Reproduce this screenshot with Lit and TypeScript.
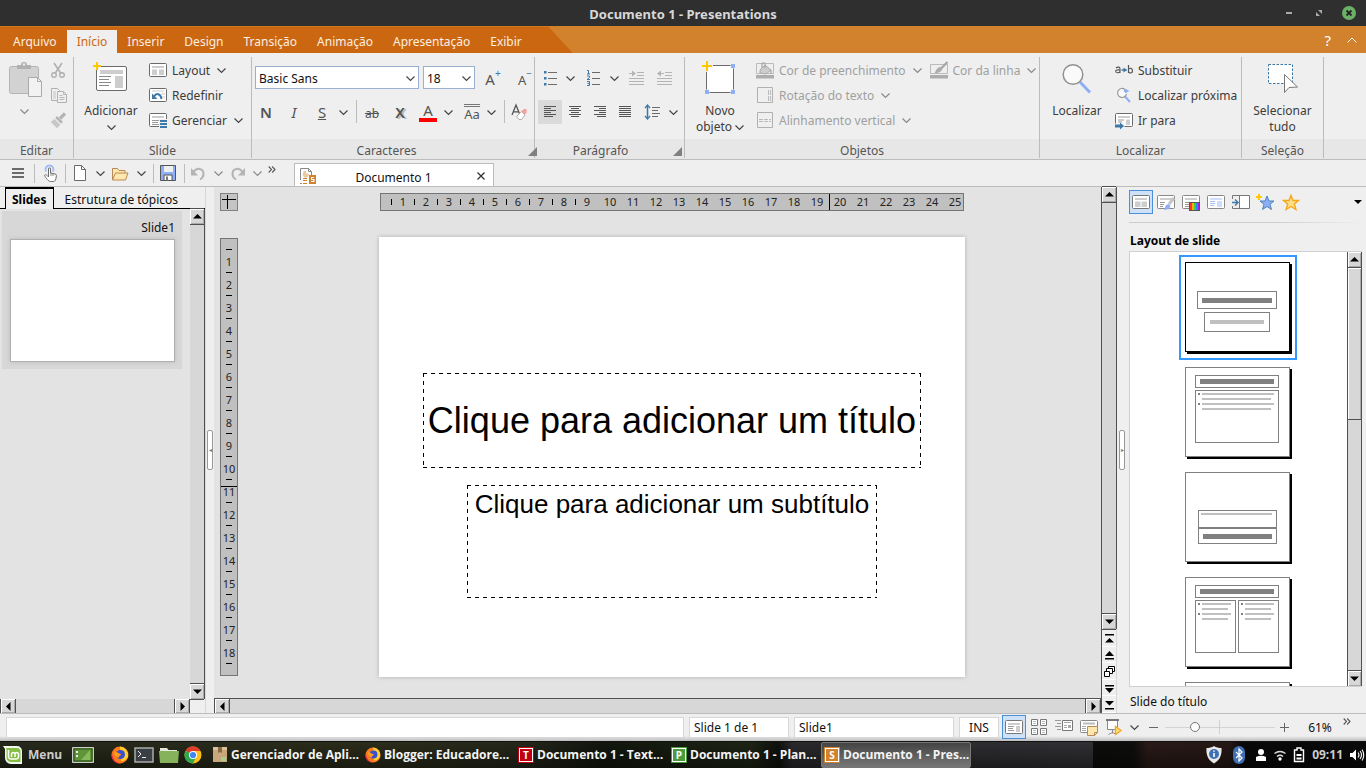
import { LitElement, html, svg, css, nothing } from "lit";
import { customElement, state } from "lit/decorators.js";
import { classMap } from "lit/directives/class-map.js";

const chev = html`<svg class="chev" width="9" height="5" viewBox="0 0 9 5"><path d="M.5 .5 4.5 4.4 8.5 .5" fill="none" stroke="currentColor" stroke-width="1.2"/></svg>`;
const more = html`<svg width="8" height="7" viewBox="0 0 8 7"><path d="M.7 .5 3.5 3.5 .7 6.5M4.2 .5 7 3.5 4.2 6.5" fill="none" stroke="#555" stroke-width="1.1"/></svg>`;
const pic = (w: number, h: number, body: unknown) =>
  html`<svg class="pic" width=${w} height=${h} viewBox="0 0 ${w} ${h}" fill="none" aria-hidden="true">${body}</svg>`;
const row = (body: unknown) => pic(18, 17, body);
const big = (body: unknown) => pic(36, 37, body);
const sq = (body: unknown) => pic(20, 20, body);

const frame = svg`<rect x=".5" y="1.5" width="17" height="13" rx="1" fill="#fff" stroke="#6b6b6b"/>`;
const I = {
  paste: big(svg`<rect x="2.5" y="6.5" width="29" height="27" rx="2" fill="#d2d2d2" stroke="#b4b4b4"/><path d="M10 9V5h4a3 3 0 0 1 6 0h4v4z" fill="#b0b0b0"/><circle cx="17" cy="4.5" r="1.2" fill="#efefef"/><path d="M21.5 17.5h9l4 4v15h-13z" fill="#f2f2f2" stroke="#aaa"/><path d="M30.5 17.5v4h4" stroke="#aaa"/>`),
  cut: row(svg`<path d="M5 1 12 11.5M13 1 6 11.5" stroke="#b0b0b0" stroke-width="1.6"/><circle cx="5" cy="13" r="2.3" stroke="#b0b0b0" stroke-width="1.4"/><circle cx="13" cy="13" r="2.3" stroke="#b0b0b0" stroke-width="1.4"/>`),
  copy: row(svg`<path d="M2.5 1.5h6l2 2v10h-8z" fill="#f0f0f0" stroke="#b0b0b0"/><path d="M4 5h3M4 7h3M4 9h3M4 11h3" stroke="#c4c4c4"/><path d="M8.5 4.5h6l3 3v8h-9z" fill="#f0f0f0" stroke="#b0b0b0"/><path d="M14.5 4.5v3h3M10.5 8.5h3M10.5 10.5h5M10.5 12.5h5" stroke="#b8b8b8"/>`),
  brush: row(svg`<path d="M16 1.5 11 6.5" stroke="#b4b4b4" stroke-width="3.2"/><path d="m8 4 6 6-2 1.6L6.3 6z" fill="#b4b4b4"/><path d="M5.5 6.8 11.5 12.6 8 16.5 1.5 10z" fill="#d0d0d0"/><path d="m3.5 9 5 6M5 8l5 6" stroke="#bcbcbc"/>`),
  add: big(svg`<rect x="3.5" y="6.5" width="30" height="24" rx="1.5" fill="#fff" stroke="#6b6b6b"/><path d="M7 10h23v4H7zM22 16h8v12h-8z" fill="#cdcdcd"/><path d="M6 16.5h12M6 19.5h10M6 22.5h12M6 25.5h10" stroke="#8a8a8a"/><path d="M4 2v8M0 6h8" stroke="#efefef" stroke-width="4"/><path d="M4 2v8M0 6h8" stroke="#ffc800" stroke-width="2"/>`),
  layout: row(svg`${frame}<path d="M3 4h12v2H3zM3 7.5h5V13H3zM10 7.5h5V13h-5z" fill="#cdcdcd"/>`),
  reset: row(svg`${frame}<path d="M3 4h12M12 7h4M12 10h4" stroke="#ccc"/><path d="M5 9.5C7 6 11.5 6 12.5 12" stroke="#3c78a8" stroke-width="2"/><path d="M3 6.5v5.5h5.5z" fill="#3c78a8"/>`),
  manage: row(svg`${frame}<path d="M3 4h12v2H3z" fill="#cdcdcd"/><path d="M3 8.5h7M3 10.5h6M3 12.5h7" stroke="#999"/><path d="M10 7h9v10h-9z" fill="#efefef"/><path d="M11 9h7M11 12h7M11 15h7" stroke="#3c78a8" stroke-width="2"/>`),
  fill: row(svg`<path d="M.5 1.5h17v10H.5z" stroke="#bbb"/><path d="M4 8 9 3l6 5-5 4-6-1z" fill="#ccc" stroke="#aaa"/><path d="M6 6V1.5a2 2 0 0 1 3 0V6M15 8v4" stroke="#aaa" stroke-width="1.3"/><path d="M0 13h18v3.5H0z" fill="#adadad"/>`),
  line: row(svg`<path d="M.5 2.5h17v9H.5z" stroke="#bbb"/><path d="M17.5 0 11 6.5" stroke="#a8a8a8" stroke-width="2.4"/><path d="M11.5 5.5 9 5 6 8l-1.5 4L10 10l2.5-2.5z" fill="#adadad"/><path d="M0 13h18v3.5H0z" fill="#adadad"/>`),
  rotate: row(svg`<path d="M1.5 .5h15v15h-15z" stroke="#b0b0b0"/><path d="M12.5 3v11M14.5 3v11" stroke="#bbb" stroke-dasharray="5 1"/>`),
  valign: row(svg`<path d="M1.5 .5h15v15h-15z" stroke="#b0b0b0"/><path d="M3 7.5h12M3 9.5h12" stroke="#bbb" stroke-dasharray="4 1"/>`),
  shape: big(svg`<path d="M4.5 5.5h27v27h-27z" fill="#fff" stroke="#6b6b6b"/><path d="M5 0v12M-1 6h12" stroke="#efefef" stroke-width="3"/><path d="M5 1v10M0 6h10" stroke="#ffc800" stroke-width="2"/><path d="M28.5 3.5h5v5h-5zM2.5 29.5h5v5h-5zM28.5 29.5h5v5h-5z" fill="#efefef"/><path d="M29 4h4v4h-4zM3 30h4v4H3zM29 30h4v4h-4z" fill="#8faef8"/>`),
  find: big(svg`<path d="M21 22 31 32.5" stroke="#8faef8" stroke-width="3"/><circle cx="14" cy="14.5" r="9.8" fill="#fafafa" stroke="#909090" stroke-width="1.5"/>`),
  replace: row(svg`<path d="M6.5 8h5" stroke="#3c78a8" stroke-width="1.5"/><path d="M8.5 5.5v5l3.5-2.5z" fill="#3c78a8"/><path d="M1 6c1-1 4-1.500 4 .8V11M5 8C1 7.500 .5 8.500 .7 9.500 1 11.500 4.500 11 5 9.500" stroke="#555" stroke-width="1.1"/><path d="M13.500 3v8M13.500 7.500c1-2 4-1.500 4 1.200s-3 3-4 1" stroke="#555" stroke-width="1.2"/>`),
  next: row(svg`<path d="m10 9.5 5 5.500" stroke="#8faef8" stroke-width="2"/><path d="M10 2.500A4.500 4.500 0 1 0 11.500 7" fill="#fafafa" stroke="#999" stroke-width="1.2"/><path d="M9 4h4.500M11 2v4" stroke="#8faef8" stroke-width="1.8"/>`),
  goto: row(svg`${frame}<path d="M3 4h12v2H3zM11 7.5h4V13h-4z" fill="#cdcdcd"/><path d="M3 8h6M3 10h4" stroke="#999"/><path d="M0 11.5h9.5v5H0z" fill="#efefef"/><path d="M0 14h6" stroke="#3c78a8" stroke-width="3"/><path d="M5 10.5v7l4-3.5z" fill="#3c78a8"/>`),
  select: big(svg`<path d="M3.5 4.5h24v19h-24z" fill="#fff" stroke="#3c78a8" stroke-dasharray="2.5 1.5"/><path d="M19.5 14.5v18l4.5-5 8.5-.5z" fill="#fff" stroke="#777"/>`),
  bullets: sq(svg`<path d="M4 3h2.500v2.500H4zM4 9h2.500v2.500H4zM4 15h2.500v2.500H4z" fill="#3c78a8"/><path d="M8 4.500h9M8 10.500h9M8 16.500h9" stroke="#6b6b6b"/>`),
  numbers: sq(svg`<path d="M4 2.500h1.500V6M4 6h3M4 8h2.500v1.500L4 11.500h3M4 13.500h2.500v4H4M4.500 15.500h2" stroke="#3c78a8"/><path d="M9 4.500h8M9 10.500h8M9 16.500h8" stroke="#6b6b6b"/>`),
  indent: sq(svg`<path d="M10 4.500h7M10 7.500h7M2 10.500h15M2 13.500h15M2 16.500h15M2 5.500h4" stroke="#b4b4b4"/><path d="M5 2.500v6l4-3z" fill="#b4b4b4"/>`),
  outdent: sq(svg`<path d="M10 4.500h7M10 7.500h7M2 10.500h15M2 13.500h15M2 16.500h15M5 5.500h4" stroke="#b4b4b4"/><path d="M6 2.500v6l-4-3z" fill="#b4b4b4"/>`),
  left: sq(svg`<path d="M4 4.500h12M4 6.500h7M4 8.500h12M4 10.500h7M4 12.500h12M4 14.500h9" stroke="#555"/>`),
  center: sq(svg`<path d="M4 4.500h12M6 6.500h8M4 8.500h12M6 10.500h8M4 12.500h12M6 14.500h8" stroke="#555"/>`),
  right: sq(svg`<path d="M4 4.500h12M9 6.500h7M4 8.500h12M9 10.500h7M4 12.500h12M7 14.500h9" stroke="#555"/>`),
  justify: sq(svg`<path d="M4 4.500h12M4 6.500h12M4 8.500h12M4 10.500h12M4 12.500h12M4 14.500h12" stroke="#555"/>`),
  spacing: sq(svg`<path d="M10 5.500h8M10 8.500h6M10 11.500h8M10 14.500h6" stroke="#6b6b6b"/><path d="M5.500 4v12" stroke="#3c78a8" stroke-width="1.5"/><path d="m3 6 2.500-3 2.500 3M3 14l2.500 3 2.500-3" stroke="#3c78a8" stroke-width="1.2"/>`),
  eraser: sq(svg`<path d="M3 13 7 3l4 10M4.300 9.800h5.400" stroke="#555" stroke-width="1.3"/><path d="m8 14 4.500-4.500 3.500 3.500-3.500 4.500H10l-2-2z" fill="#fff" stroke="#999" stroke-width=".8"/><path d="M12 9.500 15 7h2.500v3.500L15.500 13z" fill="#f4a0a0"/>`),
  menu: sq(svg`<path d="M4 6h12M4 10h12M4 14h12" stroke="#6b6b6b" stroke-width="1.8"/>`),
  hand: sq(svg`<path d="M6 8.500a4 4 0 1 1 7 0" stroke="#a4bcf5" stroke-width="2"/><path d="M8.500 13V6c0-1.600 2-1.600 2 0v4l4.500 1c1.500 .3 1.500 1 1.200 3-.3 2.500-1 4.500-2.700 4.500h-3C8.500 18.500 6 15 4.500 12.500c1-1.500 2.500-.5 4 1.500z" fill="#fff" stroke="#6b6b6b"/><path d="M11 10v3M13 10.500v2.500" stroke="#888"/>`),
  doc: sq(svg`<path d="M4.500 2.500h7l4 4v11h-11z" fill="#fff" stroke="#6b6b6b"/><path d="M11.500 2.500v4h4" stroke="#6b6b6b"/>`),
  folder: sq(svg`<path d="M2.500 17V5.500h5l1.500 2h6V10" fill="#ffe7ae" stroke="#b98a55"/><path d="m2.500 17 3-7h12.500l-2.500 7z" fill="#ffe7ae" stroke="#b98a55"/>`),
  save: sq(svg`<path d="M2.500 2.500h15v15h-15z" fill="#8faef8" stroke="#555"/><path d="M6 3h9v6H6z" fill="#efefef"/><path d="M6 12h8v5.500H6z" fill="#fff" stroke="#555"/><path d="M8 13.500h2v4H8z" fill="#777"/>`),
  undo: sq(svg`<path d="M5 9.500C9 4 15.500 5 15.500 11c0 2-1 4-3.500 5.500" stroke="#b4b4b4" stroke-width="2"/><path d="M3 5v7.500h7z" fill="#b4b4b4"/>`),
  redo: sq(svg`<path d="M15 9.500C11 4 4.500 5 4.500 11c0 2 1 4 3.500 5.500" stroke="#b4b4b4" stroke-width="2"/><path d="M17 5v7.500h-7z" fill="#b4b4b4"/>`),
  file: sq(svg`<path d="M2.500 14V2.500h8l3 3V9" fill="#fff" stroke="#888"/><path d="M10.500 2.500v3h3" stroke="#888"/><path d="M5 7.500a3 3 0 0 1 3-3v3h2.500a3 3 0 1 1-5.500 0z" fill="#f0c8a0"/><path d="M5 12.500h4M5 14.500h4M5 17.500h4M2 17.500h2" stroke="#d2822c"/><path d="M11 9h7v9h-7z" fill="#d2822c"/><path d="M16 11.500h-2.500v2H16v2h-3" stroke="#fff" stroke-width="1.1"/>`),
  p1: sq(svg`<rect x="1.500" y="3.500" width="17" height="13" rx="1" fill="#fff" stroke="#777"/><path d="M4 6h12v2H4zM4 9.500h5.500V15H4zM10.500 9.500H16V15h-5.500z" fill="#cdcdcd"/>`),
  p2: sq(svg`<rect x="1.500" y="3.500" width="17" height="13" rx="1" fill="#fff" stroke="#888"/><path d="M4 6h12v2H4z" fill="#cdcdcd"/><path d="M4 10.500h5M4 12.500h4M4 14.500h3" stroke="#999"/><path d="m18 6-5 6" stroke="#c4c4c4" stroke-width="3"/><path d="m8 18 2-5 3-1 1.500 2-1.500 3z" fill="#8faef8"/>`),
  p3: sq(svg`<rect x="1.500" y="3.500" width="17" height="13" rx="1" fill="#fff" stroke="#888"/><path d="M4 6h12v2H4z" fill="#cdcdcd"/><path d="M4 10.500h4M4 12.500h4M4 14.500h4" stroke="#999"/><path d="M8 10h11v9H8z" fill="#555"/><path d="M9 11h2v7H9z" fill="#f33"/><path d="M11 11h2v7h-2z" fill="#ffb000"/><path d="M13 11h2v7h-2z" fill="#4c3"/><path d="M15 11h2v7h-2z" fill="#28f"/><path d="M17 11h1v7h-1z" fill="#a2d"/>`),
  p4: sq(svg`<rect x="1.500" y="3.500" width="17" height="13" rx="1" fill="#fff" stroke="#888"/><path d="M4 6h12v2H4zM11 9h5v6h-5z" fill="#cfdcff"/><path d="M4 9.500h5M4 11.500h5M4 13.500h4" stroke="#a9c0f5"/>`),
  p5: sq(svg`<path d="M8.500 3.500h10v13h-10z" fill="#fff"/><path d="M1.500 7V3.500h17v13h-17V14M8.500 3.500v13" stroke="#777"/><path d="M1 10.500h5" stroke="#3c78a8" stroke-width="1.5"/><path d="m4 7.500 3 3-3 3" stroke="#3c78a8" stroke-width="1.5"/>`),
  p6: sq(svg`<path d="m11 4 2 5h5l-4 3.300 1.500 5.200L11 14.500l-4.500 3L8 12.300 4 9h5z" fill="#8faef8" stroke="#4a86b8"/><path d="M3 2v6M0 5h6" stroke="#ffc800" stroke-width="2"/>`),
  p7: sq(svg`<path d="m10 3.500 2 5h5.500l-4.200 3.500 1.600 5.500-4.900-3-4.900 3L6.700 12 2.500 8.500H8z" fill="#ffe08a" stroke="#f5a81c" stroke-width="1.4"/>`),
  v1: sq(svg`<rect x="1.500" y="3.500" width="17" height="13" rx="1" fill="#fff" stroke="#777"/><path d="M4 6h12v2H4zM12 9h4v6h-4z" fill="#cdcdcd"/><path d="M4 9.500h6M4 11.500h5M4 13.500h6" stroke="#999"/>`),
  v2: sq(svg`<path d="M2.500 2.500h6v6h-6zM11.500 2.500h6v6h-6zM2.500 11.500h6v6h-6zM11.500 11.500h6v6h-6z" fill="#fff" stroke="#777"/><path d="M4 4.500h3M4 6.500h3M13 4.500h3M13 6.500h3M4 13.500h3M4 15.500h3M13 13.500h3M13 15.500h3" stroke="#bbb"/>`),
  v3: sq(svg`<path d="M1 3.500h6M3 6.500h4M1 9.500h6M3 12.500h4" stroke="#999"/><path d="M8.500 3.500h10v10h-10z" fill="#fff" stroke="#777"/><path d="M10 5.500h7M10 8.500h3M10 10.500h3" stroke="#aaa"/><path d="M14 8h3v3h-3z" fill="#aaa"/>`),
  v4: sq(svg`<rect x="1.500" y="3.500" width="17" height="12" rx="1" fill="#fff" stroke="#888"/><path d="M4 6.500h12" stroke="#bbb" stroke-width="2"/><path d="M3 9.500h4M3 11.500h4M3 13.500h4" stroke="#aaa"/><path d="M8.500 9.500h10v6l-3 3h-7z" fill="#ffe7ae" stroke="#b98a55"/><path d="M15.500 18.500v-3h3" stroke="#b98a55"/>`),
  v5: sq(svg`<path d="M3.500 3.500v9h10v-9M8.500 12.500v4M4.500 17.500l4-2 4 2" stroke="#888" fill="#fff"/><path d="M2 3h13" stroke="#777" stroke-width="2"/><path d="m11.500 9.500 5.500 4-5.500 4z" fill="#ffe08a" stroke="#f5a81c" stroke-width="1.4"/>`),
};

const tri: Record<string, unknown> = {
  up: pic(9, 9, svg`<path d="M4.500 2 9 6.500H0z" fill="#000"/>`),
  down: pic(9, 9, svg`<path d="M4.500 7 0 2.500h9z" fill="#000"/>`),
  left: pic(9, 9, svg`<path d="M2 4.500 6.500 0v9z" fill="#000"/>`),
  right: pic(9, 9, svg`<path d="M7 4.500 2.500 0v9z" fill="#000"/>`),
  first: pic(9, 9, svg`<path d="M0 0h9v1.500H0zM4.500 4 9 8.500H0z" fill="#000"/>`),
  prev: pic(9, 9, svg`<path d="M4.500 0 9 5H0zM0 7h9v1.500H0z" fill="#000"/>`),
  pages: pic(11, 11, svg`<path d="M4.500 5V.5h6v5H8" fill="#fff" stroke="#000"/><path d="M2.500 7V2.500h6v5H6" fill="#fff" stroke="#000"/><path d="M.5 5.500h5v5h-5z" fill="#fff" stroke="#000"/>`),
  next: pic(9, 9, svg`<path d="M0 1h9v1.500H0zM0 4h9L4.500 9z" fill="#000"/>`),
  last: pic(9, 9, svg`<path d="M0 0h9L4.500 4.500zM0 7h9v1.500H0z" fill="#000"/>`),
};

const box = (x: number, y: number, w: number, h: number) =>
  svg`<rect x=${x + 0.5} y=${y + 0.5} width=${w - 1} height=${h - 1} fill="#fff" stroke="#808080"/>`;
const bar = (x: number, y: number, w: number, h: number, c = "#c0c0c0") =>
  svg`<rect x=${x} y=${y} width=${w} height=${h} fill=${c}/>`;
const heading = svg`${box(10, 8, 84, 13)}${bar(15, 12, 74, 5, "#808080")}`;
const list = (x: number, w: number) => svg`
  ${box(x, 23, w, 53)}
  ${[26, 36].map((y) => svg`${bar(x + 3, y, 2, 2, "#808080")}${bar(x + 7, y, w - 12, 2)}${bar(x + 7, y + 5, w - 15, 2)}`)}`;
const layouts = [
  { name: "Slide do título", art: svg`${box(12, 29, 80, 18)}${bar(17, 36, 70, 5, "#808080")}${box(19, 50, 66, 20)}${bar(25, 58, 54, 4)}` },
  { name: "Título e texto", art: svg`${heading}${list(10, 84)}` },
  { name: "Cabeçalho da seção", art: svg`${box(13, 38, 79, 18)}${bar(16, 41, 71, 2)}${box(13, 56, 79, 16)}${bar(18, 62, 69, 5, "#808080")}` },
  { name: "Duas colunas", art: svg`${heading}${list(10, 41)}${list(53, 41)}` },
  { name: "Comparação", art: svg`${heading}` },
];

const appIcon = (letter: string, color: string) =>
  html`<span class="app ${color}"><span>${letter}</span></span>`;
const firefox = pic(18, 18, svg`<circle cx="9" cy="9" r="8.5" fill="#ff7a1a"/><path d="M9 .5a8.500 8.500 0 0 1 8 10c-1.500 4-5 5-7 4.500z" fill="#ffcf2e"/><path d="M1 6c0 6 3 11 9 11.500-5 .5-9.500-3-9.500-8z" fill="#e8264a"/><circle cx="9.5" cy="8.5" r="4.5" fill="#3a4fd0"/><path d="M3 6c3-1 4 2 7 2 0 2-3 2-2 4-3-.5-5-3-5-6z" fill="#ff9a1a"/>`);
const windows = [
  { title: "Gerenciador de Apli…", icon: pic(16, 18, svg`<path d="M1 1h14v15H1z" fill="#c9a67c"/><path d="M6 1h4v6L8 6 6 7z" fill="#8a6a44"/><path d="M1 1h5v3H1zM10 1h5v3h-5z" fill="#dcc09a"/><path d="M9 11h5v4H9z" fill="#a8cf8c"/>`) },
  { title: "Blogger: Educadore…", icon: firefox },
  { title: "Documento 1 - Text…", icon: appIcon("T", "red") },
  { title: "Documento 1 - Plan…", icon: appIcon("P", "green") },
  { title: "Documento 1 - Pres…", icon: appIcon("S", "orange"), active: true },
];

@customElement("app-root")
export class AppRoot extends LitElement {
  @state() private tab = "Início";
  @state() private chosen = 0;

  static styles = css`
    :host { display: grid; grid-template-rows: 26px 27px auto 27px 1fr 28px 27px; height: 100vh; overflow: hidden;
      font: 12px/16px "Noto Sans", "Open Sans", sans-serif; color: #3c3c3c; background: #efefef; }
    * { box-sizing: border-box; }
    button { font: inherit; color: inherit; background: none; border: 0; padding: 0; display: flex; align-items: center; justify-content: center; }
    svg { display: block; flex: none; overflow: visible; }
    .off { color: #a0a0a0; }
    .chev { color: #444; }
    .off .chev { color: #888; }

    .title { display: grid; grid-template-columns: 1fr auto 1fr; align-items: center; background: #2f2f2f; color: #d8d8d8; font-size: 13px; font-weight: 700; }
    .title h1 { grid-column: 2; margin: 0; padding-top: 2px; font: inherit; }
    .controls { display: flex; justify-content: flex-end; gap: 16px; padding-right: 10px; }

    .bar { display: flex; align-items: stretch; background: #d2822c; color: #fff; }
    .tabs { display: flex; align-items: flex-end; padding: 0 41px 0 3px; background: #cb6710; border-top: 1px solid #cf7620; clip-path: polygon(0 0, calc(100% - 25px) 0, 100% 100%, 0 100%); }
    .tabs button { height: 23px; padding: 0 10px; color: #fbeee2; }
    .tabs .on { background: #efefef; color: #cb6710; }
    .help { margin-left: auto; display: flex; align-items: center; gap: 16px; padding-right: 9px; font-size: 15px; }

    .ribbon { display: flex; padding-top: 4px; border-bottom: 1px solid #bcbcbc; background: linear-gradient(#efefef 86px, #e7e7e7 86px); }
    .group { display: grid; grid-template-rows: 82px 19px; border-right: 1px solid #bcbcbc; margin-bottom: 1px; }
    .group footer { position: relative; display: flex; align-items: center; justify-content: center; padding-top: 5px; color: #555; }
    .group footer.cornered { padding-right: 18px; }
    .corner { position: absolute; right: 2px; bottom: 2px; }
    .body { display: flex; align-items: flex-start; }
    .g-edit { width: 74px; } .g-slide { width: 178px; } .g-char { width: 283px; } .g-para { width: 150px; }
    .g-obj { width: 355px; } .g-find { width: 202px; } .g-sel { width: 82px; }
    .big { flex-direction: column; justify-content: flex-start; gap: 6px; padding-top: 3px; }
    .big .cap { display: block; text-align: center; }
    .big .cap .chev { display: inline-block; vertical-align: middle; }
    .w-paste { width: 46px; margin-left: 2px; padding-right: 1px; }
    .w-narrow { width: 70px; } .w-wide { width: 74px; } .w-all { width: 100%; }
    .rows { display: grid; grid-template-rows: repeat(3, 25px); padding: 1px 0 0 1px; justify-items: start; }
    .rows > div { display: flex; gap: 8px; }
    .item { gap: 5px; height: 25px; white-space: nowrap; }
    .item .chev { margin-left: 2px; }
    .pair { display: grid; gap: 10px; padding-top: 9px; }
    .pair > div { display: grid; height: 24px; align-items: stretch; }
    .c1 { grid-template-columns: 164px 52px 28px 28px; gap: 4px; padding-left: 3px; }
    .c2 { grid-template-columns: 28px 28px 28px 14px 12px 20px 36px 20px 20px 28px 10px 16px 14px; }
    .p1 { grid-template-columns: 24px 16px 30px 12px 34px 22px; padding-left: 3px; }
    .p2 { grid-template-columns: 24px 25px 25px 25px 29px 14px; padding-left: 3px; }
    .c2 button { font-size: 15px; color: #555; }
    .combo { position: relative; display: block; height: 24px; }
    .combo select { appearance: none; width: 100%; height: 23px; border: 1px solid #9bb0d0; border-radius: 0; background: #fff; font: inherit; color: #111; padding: 2px 3px 0; }
    .combo .chev { position: absolute; right: 4px; top: 10px; }
    .sep { width: 1px; background: #bcbcbc; justify-self: center; height: 23px; }
    .b { font-weight: 600; } .i { font-style: italic; } .u { text-decoration: underline; }
    .c2 .s { text-decoration: line-through; font-size: 12px; padding-top: 3px; }
    .x { text-shadow: 2px 1px #bbb; }
    .red-a { border-bottom: 4px solid #f00; line-height: 16px; width: 18px; }
    .over { border-top: 3px double #777; line-height: 14px; font-size: 13px; }
    .grow { font-size: 15px; color: #555; } .grow.small { font-size: 13px; }
    .grow sup { font-size: 10px; line-height: 8px; color: #3c78a8; vertical-align: 8px; }
    .pressed { background: #dadada; }

    .quick { display: grid; grid-template-columns: 32px 1px 30px 1px 28px 12px 28px 14px 10px 20px 12px 16px 24px 16px 22px 8px 218px; padding-left: 2px; border-bottom: 1px solid #bcbcbc; }
    .quick .sep { height: 19px; align-self: center; }
    .quick .top { align-self: start; padding-top: 6px; }
    .doc { display: grid; grid-template-columns: 20px 1fr 16px; align-items: center; margin: 3px 0 0 18px; padding: 2px 4px 0 3px; border: 1px solid #bcbcbc; border-bottom: 0; background: #fff; color: #111; text-align: center; }
    .doc span { padding: 3px 4px 0 0; }

    .work { display: grid; grid-template-columns: 205px 9px minmax(0, 1fr) 16px 12px 237px; min-height: 0; color: #111; }
    .left { display: grid; grid-template-rows: 22px minmax(0, 1fr) 14px; min-height: 0; }
    .ltabs { display: flex; background: linear-gradient(#efefef 21px, #000 21px); padding-left: 5px; }
    .ltabs button { height: 21px; padding: 4px 10px 0 11px; }
    .ltabs .on { height: 22px; padding: 1px 6px 0; background: #efefef; font-weight: 700; border: 1px solid #000; border-width: 2px 1px 0; color: #000; }
    .lview { display: grid; grid-template-columns: 1fr 15px; background: #e3e3e3; min-height: 0; }
    .card { margin: 2px 8px 0 2px; height: 158px; padding: 9px 7px 7px 8px; background: #d7d7d7; }
    .card p { margin: 0 0 3px; text-align: right; }
    .thumb { height: 123px; background: #fff; border: 1px solid #b0b0b0; box-shadow: 0 0 4px #bbb; }
    .foot { display: grid; grid-template-columns: 1fr 15px; }
    .vbar { display: grid; grid-template-rows: 15px minmax(0, 1fr) 15px; background: #d7d7d7; border: solid #505050; border-width: 0 1px 0 0; min-height: 0; }
    .vbar button, .hbar button { background: #d7d7d7; box-shadow: inset 1px 1px #fff, inset -1px -1px #aaa; }
    .vbar button { outline: 1px solid #505050; outline-offset: 0; clip-path: inset(-1px 0 -1px 0); }
    .hbar { display: grid; grid-template-columns: 16px minmax(0, 1fr) 16px; background: #d7d7d7; min-width: 0; }
    .hbar button { border: solid #505050; border-width: 0 1px; }
    .both { border-width: 0 1px; }
    .knob { height: 152px; margin-top: 1px; border-bottom: 1px solid #505050; box-shadow: inset 1px 1px #fff, inset -1px 0 #aaa; }
    .split { display: flex; align-items: center; border-left: 1px solid #d7d7d7; padding-left: 1px; }
    .split.r { border: 0; padding-left: 2px; }
    .grip { display: flex; align-items: center; justify-content: center; width: 6px; height: 40px; border: 1px solid #999; border-radius: 2px; background: #fff; color: #777; font-size: 6px; }

    .stage { display: grid; grid-template-rows: minmax(0, 1fr) 15px; min-width: 0; min-height: 0; background: #e3e3e3; }
    .desk { display: grid; grid-template-columns: 18px minmax(0, 1fr); grid-template-rows: 18px minmax(0, 1fr); row-gap: 26px; column-gap: 5px; padding: 6px 0 0 6px; overflow: hidden; justify-items: center; align-items: start; }
    .stage .hbar { border-top: 1px solid #505050; }
    .origin { width: 18px; height: 18px; border: 1px solid #808080; background: #c4c4c4; }
    .hr { display: flex; width: 584px; height: 18px; padding-left: 10px; }
    .vr { width: 18px; height: 438px; padding-top: 10px; margin-top: 1px; }
    .hr, .vr { position: relative; background: #c0c0c0; border: 1px solid #757575; overflow: hidden; font-size: 11px; color: #222; }
    .hr span { flex: 0 0 23px; height: 16px; padding-left: 1px; display: flex; align-items: center; justify-content: center; background: linear-gradient(#000, #000) 0 5px / 1px 6px no-repeat; }
    .hr .plain { background: none; }
    .vr span { height: 23px; display: flex; align-items: center; justify-content: center; padding-top: 2px; background: linear-gradient(#000, #000) 5px 0 / 6px 1px no-repeat; }
    .mark { position: absolute; background: #000; }
    .hr .mark { left: 448px; top: 0; width: 1px; height: 100%; }
    .vr .mark { top: 247px; left: 0; height: 1px; width: 100%; }
    .slide { display: flex; flex-direction: column; align-items: center; gap: 17px; width: 586px; height: 440px; padding-top: 136px; background: #fff; box-shadow: 0 0 4px #b0b0b0; color: #000; font-family: "Liberation Sans", Arial, sans-serif; }
    .hold { white-space: nowrap; display: flex; justify-content: center;
      --h: repeating-linear-gradient(90deg, #000 0 4px, transparent 4px 8px); --v: repeating-linear-gradient(#000 0 4px, transparent 4px 8px);
      background: var(--h) 0 0 / 100% 1px no-repeat, var(--h) 0 100% / 100% 1px no-repeat, var(--v) 0 0 / 1px 100% no-repeat, var(--v) 100% 0 / 1px 100% no-repeat; }
    .hold.t { width: 498px; height: 95px; align-items: center; font-size: 36px; margin: 0; font-weight: 400; }
    .hold.st { width: 410px; height: 113px; padding-top: 4px; font-size: 26px; line-height: 30px; margin: 0; }
    .mainbar { display: grid; grid-template-rows: minmax(0, 1fr) 84px; min-height: 0; }
    .nav { display: grid; grid-template-rows: repeat(5, 1fr); padding-top: 1px; border-left: 1px solid #505050; border-right: 1px solid #d7d7d7; }
    .nav button { border-bottom: 1px solid #fff; padding-top: 2px; }

    .right { display: grid; grid-template-rows: 36px 27px minmax(0, 1fr) 26px; min-height: 0; padding-right: 4px; }
    .tools { display: flex; gap: 1px; padding-top: 3px; border-bottom: 1px solid; border-image: linear-gradient(90deg, #ccc 60%, #efefef) 1; }
    .tools button { width: 24px; height: 24px; }
    .tools .more { width: 9px; margin-left: auto; }
    .tools .on, .views .on { background: #cfe1f7; outline: 1px solid #4a90d9; outline-offset: -1px; }
    .right h2 { margin: 0; font-size: 12px; line-height: 16px; padding: 10px 0 0 1px; color: #000; }
    .right p { margin: 0; padding: 7px 1px 0; }
    .lay { display: grid; grid-template-columns: minmax(0, 1fr) 15px; margin-top: 1px; background: #fff; border: 1px solid #d0d0d0; border-right: 0; overflow: hidden; min-height: 0; }
    .lay .vbar { border-width: 0 1px; }
    .cards { display: grid; grid-auto-rows: 105px; justify-content: center; padding: 3px 2px 0 0; overflow: hidden; min-height: 0; }
    .cards button { width: 118px; height: 105px; border: 2px solid transparent; justify-content: flex-start; align-items: flex-start; padding: 5px 4px; }
    .cards .on { border-color: #39f; }

    .status { display: grid; grid-template-columns: minmax(0, 1fr) 100px 160px 40px auto; gap: 5px; padding: 3px 15px 0 6px; border-top: 1px solid #bcbcbc; background: linear-gradient(#efefef 22px, #bbb); color: #111; }
    .field { height: 21px; padding: 1px 4px; border: 1px solid #d7d7d7; background: #fff; line-height: 18px; }
    .mid { text-align: center; }
    .views { display: grid; grid-template-columns: 24px repeat(4, 25px) 16px 23px 110px 18px 50px 8px; align-items: center; margin: -2px 0 0 -2px; height: 24px; }
    .views button { height: 24px; }
    .views output { text-align: center; padding: 1px 0 0 4px; }
    .views .top { align-items: flex-start; padding-top: 3px; }
    input[type="range"] { appearance: none; width: 110px; height: 14px; margin: 0; background: linear-gradient(#d0d0d0, #d0d0d0) 54px 0 / 1px 14px no-repeat, linear-gradient(#d4d4d4, #d4d4d4) 0 7px / 100% 1px no-repeat; }
    input[type="range"]::-webkit-slider-thumb { appearance: none; width: 10px; height: 10px; border: 1px solid #777; border-radius: 50%; background: #fff; }

    .task { display: flex; align-items: center; padding: 0 2px 0 3px; color: #f4f4f4; font: 700 12px/16px "Open Sans", "Noto Sans", sans-serif; border-top: 1px solid #111;
      background: linear-gradient(#0000, #0006), linear-gradient(90deg, #25291a 0, #2b2c1a 28%, #25271a 38%, #12160d 44%, #1d2415 55%, #0e110c 57%, #29292c 58%, #303034 80%, #0c0e0a 80%, #0e0e0c 83%, #2a1a17 84%, #261815 90%, #080808 91%, #0a0a0a 100%); }
    .start { gap: 5px; color: #ccc; width: 60px; justify-content: flex-start; }
    .launch { display: flex; gap: 5px; margin-left: 9px; }
    .launch .wide { margin-right: 12px; }
    .wins { display: flex; gap: 3px; margin-left: 7px; }
    .wins button { width: 150px; height: 26px; padding-left: 3px; gap: 3px; justify-content: flex-start; white-space: nowrap; }
    .wins svg { width: 16px; height: 18px; }
    .wins .on { background: linear-gradient(#444, #777); border: 1px solid #777; padding-left: 2px; border-radius: 2px; }
    .app { display: flex; width: 16px; height: 16px; padding: 1px; }
    .app span { flex: 1; border: 1px solid #fff; font-size: 10px; line-height: 12px; text-align: center; color: #fff; }
    .red { background: #c00010; } .green { background: #4b9b3c; } .orange { background: #d2822c; }
    .tray { display: flex; align-items: center; gap: 7px; margin-left: auto; color: #ccc; }
  `;

  private vbar(cls = "", thumb = false) {
    return html`<div class="vbar ${cls}"><button aria-label="Subir">${tri.up}</button><div>${thumb ? html`<div class="knob"></div>` : nothing}</div><button aria-label="Descer">${tri.down}</button></div>`;
  }
  private hbar() {
    return html`<div class="hbar"><button aria-label="Esquerda">${tri.left}</button><div></div><button aria-label="Direita">${tri.right}</button></div>`;
  }
  private item(icon: unknown, label: string, drop = false, off = false) {
    return html`<button class="item ${off ? "off" : ""}">${icon}<span>${label}</span>${drop ? chev : nothing}</button>`;
  }
  private group(cls: string, name: string, body: unknown, corner = false) {
    return html`<section class="group ${cls}"><div class="body">${body}</div><footer class=${classMap({ cornered: corner })}>${name}${corner ? html`<svg class="corner" width="9" height="9"><path d="M9 0v9H0z" fill="#808080"/></svg>` : nothing}</footer></section>`;
  }
  private ib(icon: unknown, label: string, cls = "") {
    return html`<button class=${cls} aria-label=${label}>${icon}</button>`;
  }

  private ribbon() {
    return html`<div class="ribbon">
      ${this.group("g-edit", "Editar", html`
        <button class="big w-paste off" aria-label="Colar">${I.paste}<span class="cap">${chev}</span></button>
        <div class="rows off">${this.ib(I.cut, "Recortar", "item")}${this.ib(I.copy, "Copiar", "item")}${this.ib(I.brush, "Pincel", "item")}</div>`)}
      ${this.group("g-slide", "Slide", html`
        <button class="big w-wide">${I.add}<span class="cap">Adicionar<br>${chev}</span></button>
        <div class="rows">${this.item(I.layout, "Layout", true)}${this.item(I.reset, "Redefinir")}${this.item(I.manage, "Gerenciar", true)}</div>`)}
      ${this.group("g-char", "Caracteres", html`<div class="pair">
        <div class="c1">
          <label class="combo"><select aria-label="Fonte"><option>Basic Sans</option></select>${chev}</label>
          <label class="combo"><select aria-label="Tamanho"><option>18</option></select>${chev}</label>
          <button class="grow"><span>A<sup>+</sup></span></button><button class="grow small"><span>A<sup>−</sup></span></button>
        </div>
        <div class="c2">
          <button class="b">N</button><button class="i">I</button><button class="u">S</button><button aria-label="Sublinhado">${chev}</button><span class="sep"></span>
          <button class="s">ab</button><button class="b x">X</button><button><span class="red-a">A</span></button><button aria-label="Cor">${chev}</button>
          <button><span class="over">Aa</span></button><button aria-label="Caixa">${chev}</button><span class="sep"></span>${this.ib(I.eraser, "Limpar formatação")}
        </div></div>`, true)}
      ${this.group("g-para", "Parágrafo", html`<div class="pair">
        <div class="p1">${this.ib(I.bullets, "Marcadores")}${this.ib(chev, "Opções de marcadores")}${this.ib(I.numbers, "Numeração")}${this.ib(chev, "Opções de numeração")}${this.ib(I.indent, "Aumentar recuo")}${this.ib(I.outdent, "Diminuir recuo")}</div>
        <div class="p2">${this.ib(I.left, "Esquerda", "pressed")}${this.ib(I.center, "Centro")}${this.ib(I.right, "Direita")}${this.ib(I.justify, "Justificar")}${this.ib(I.spacing, "Espaçamento")}${this.ib(chev, "Opções de espaçamento")}</div>
        </div>`, true)}
      ${this.group("g-obj", "Objetos", html`
        <button class="big w-narrow">${I.shape}<span class="cap">Novo<br>objeto ${chev}</span></button>
        <div class="rows">
          <div>${this.item(I.fill, "Cor de preenchimento", true, true)}${this.item(I.line, "Cor da linha", true, true)}</div>
          ${this.item(I.rotate, "Rotação do texto", true, true)}${this.item(I.valign, "Alinhamento vertical", true, true)}</div>`)}
      ${this.group("g-find", "Localizar", html`
        <button class="big w-wide">${I.find}<span class="cap">Localizar</span></button>
        <div class="rows">${this.item(I.replace, "Substituir")}${this.item(I.next, "Localizar próxima")}${this.item(I.goto, "Ir para")}</div>`)}
      ${this.group("g-sel", "Seleção", html`<button class="big w-all">${I.select}<span class="cap">Selecionar<br>tudo</span></button>`)}
    </div>`;
  }

  private quick() {
    const sep = html`<span class="sep"></span>`;
    return html`<div class="quick">
      ${this.ib(I.menu, "Menu")}${sep}${this.ib(I.hand, "Modo de toque")}${sep}
      ${this.ib(I.doc, "Novo")}${this.ib(chev, "Opções de novo")}${this.ib(I.folder, "Abrir")}${this.ib(chev, "Recentes")}${sep}
      ${this.ib(I.save, "Salvar")}${sep}
      ${this.ib(I.undo, "Desfazer", "off")}${this.ib(chev, "Histórico", "off")}${this.ib(I.redo, "Refazer", "off")}${this.ib(chev, "Histórico de refazer", "off")}
      ${this.ib(more, "Mais", "top")}
      <div class="doc">${I.file}<span>Documento 1</span><button aria-label="Fechar documento"><svg width="8" height="8"><path d="m.5 .5 7 7M7.500 .5l-7 7" stroke="#333" stroke-width="1.3"/></svg></button></div>
    </div>`;
  }

  private desk() {
    const nums = (n: number) => Array.from({ length: n }, (_, i) => i + 1);
    return html`<main class="stage">
      <div class="desk">
        <svg class="origin" viewBox="0 0 16 16"><path d="M1 5.500h14M6.500 1v14" stroke="#000"/></svg>
        <div class="hr">${nums(25).map((n) => html`<span class=${n > 9 ? "plain" : ""}>${n}</span>`)}<i class="mark"></i></div>
        <div class="vr">${nums(18).map((n) => html`<span>${n}</span>`)}<span></span><i class="mark"></i></div>
        <article class="slide"><h2 class="hold t">Clique para adicionar um título</h2><p class="hold st">Clique para adicionar um subtítulo</p></article>
      </div>${this.hbar()}</main>`;
  }

  private side() {
    const tools = [I.p1, I.p2, I.p3, I.p4, I.p5, I.p6, I.p7];
    const names = ["Layout", "Design", "Esquema de cores", "Plano de fundo", "Transição", "Nova animação", "Animação"];
    return html`<aside class="right">
      <div class="tools">${tools.map((t, i) => this.ib(t, names[i], i ? "" : "on"))}<button class="more" aria-label="Opções"><svg width="8" height="4"><path d="M0 0h8L4 4z" fill="#000"/></svg></button></div>
      <h2>Layout de slide</h2>
      <div class="lay"><div class="cards">${layouts.map((l, i) => html`
        <button class=${classMap({ on: i === this.chosen })} aria-label=${l.name} @click=${() => (this.chosen = i)}>
          <svg width="107" height="92" viewBox="0 0 107 92"><path d="M2 2h105v90H2z" fill="#000"/><rect x=".5" y=".5" width="104" height="89" fill="#fff" stroke=${i === this.chosen ? "#000" : "#808080"}/>${l.art}</svg>
        </button>`)}</div>${this.vbar("", true)}</div>
      <p>${layouts[this.chosen].name}</p></aside>`;
  }

  private status() {
    const views: [unknown, string][] = [[I.v1, "Normal"], [I.v2, "Classificador"], [I.v3, "Tópicos"], [I.v4, "Anotações"], [I.v5, "Apresentação"]];
    return html`<footer class="status">
      <div class="field"></div><div class="field">Slide 1 de 1</div><div class="field">Slide1</div><div class="field mid">INS</div>
      <div class="views">${views.map(([v, n], i) => this.ib(v, n, i ? "" : "on"))}${this.ib(chev, "Opções de exibição")}
        <button aria-label="Reduzir"><svg width="9" height="9"><path d="M0 4.500h9" stroke="#666"/></svg></button>
        <input type="range" min="0" max="100" value="25" aria-label="Zoom">
        <button aria-label="Ampliar"><svg width="9" height="9"><path d="M0 4.500h9M4.500 0v9" stroke="#666"/></svg></button>
        <output>61%</output>${this.ib(more, "Mais opções", "top")}</div></footer>`;
  }

  private task() {
    return html`<nav class="task">
      <button class="start">${pic(20, 18, svg`<path d="M0 0h14a5 5 0 0 1 5 5v13H8a6 6 0 0 1-6-6V3z" fill="#f4f8ee"/><path d="M2.500 2H14a3.500 3.500 0 0 1 3.500 3.500V16H8a4.500 4.500 0 0 1-4.500-4.500V3z" fill="#86be43"/><path d="M5.500 4v6.500a2.500 2.500 0 0 0 2.500 2.500h5a2.500 2.500 0 0 0 2.500-2.500V8a1.800 1.800 0 0 0-3.500 0v3M12 8a1.800 1.800 0 0 0-3.500 0v3" stroke="#fff" stroke-width="1.5"/>`)}<span>Menu</span></button>
      <div class="launch">
        <button class="wide" aria-label="Mostrar área de trabalho">${pic(22, 16, svg`<path d="M.5 .5h21v15H.5z" fill="#5f9438" stroke="#ccc"/><path d="M2 2h18v12H2z" stroke="#2c4a1c"/><path d="M4 4h2v2H4zM4 8h2v2H4z" fill="#eee"/><path d="m9 13 9-10v10z" fill="#86b95c"/>`)}</button>
        ${this.ib(firefox, "Firefox")}
        ${this.ib(pic(20, 16, svg`<path d="M1 1h18v14H1z" fill="#3a3f44" stroke="#aaa" stroke-width="1.5"/><path d="m4 4 3 3-3 3M8 10.500h4" stroke="#eee"/>`), "Terminal")}
        ${this.ib(pic(20, 16, svg`<path d="M1 1h7l1.500 2H18v4H1z" fill="#e4e8dc"/><path d="M0 4h20l-1 12H1z" fill="#87b25c"/>`), "Arquivos")}
        ${this.ib(pic(18, 18, svg`<circle cx="9" cy="9" r="8.5" fill="#fbc116"/><path d="M9 9 1.600 4.800A8.500 8.500 0 0 1 16.500 5H9z" fill="#e33b2e"/><path d="M9 9 1.600 4.800A8.500 8.500 0 0 0 9 17.500L12 11z" fill="#2da94f"/><circle cx="9" cy="9" r="4" fill="#fff"/><circle cx="9" cy="9" r="3.1" fill="#4286f5"/>`), "Chrome")}
      </div>
      <div class="wins">${windows.map((w) => html`<button class=${w.active ? "on" : ""}>${w.icon}<span>${w.title}</span></button>`)}</div>
      <div class="tray">
        ${pic(18, 18, svg`<path d="M9 0c2 1.500 5 2 7.500 2 .5 7-1.500 12-7.500 15.500C3 14 1 9 1.500 2 4 2 7 1.500 9 0z" fill="#e8e8e8"/><circle cx="9" cy="8" r="5" fill="#3d6fb4"/><path d="M9 7v4M9 4.500v1.200" stroke="#fff" stroke-width="1.6"/>`)}
        ${pic(18, 18, svg`<rect x="3" y="0" width="12" height="18" rx="6" fill="#3d6fb4"/><path d="m6 6 6 6-3 3V3l3 3-6 6" stroke="#fff" stroke-width="1.2"/>`)}
        ${pic(12, 14, svg`<circle cx="6" cy="4" r="3" fill="#fff"/><path d="M1 13V9q5-2.500 10 0v4z" fill="#fff"/>`)}
        ${pic(12, 12, svg`<path d="M.5 4.500q5.500-4 11 0M3 7.500q3-2.500 6 0" stroke="#ddd" stroke-width="1.5"/><circle cx="6" cy="10" r="1.7" fill="#fff"/>`)}
        ${pic(12, 14, svg`<path d="M4 0h4v2h2.500v11.500h-9V2H4z" stroke="#fff" stroke-width="1.4"/><path d="M3.500 6h5v2h-5zM3.500 9.500h5v2h-5z" fill="#fff"/>`)}
        <time>09:11</time>
        ${pic(14, 12, svg`<path d="M0 4h2.500L6 .5v11L2.500 8H0z" fill="#fff"/><path d="M8 3.500q2 2.500 0 5M10 2q3 4 0 8M12 .5q3.500 5.500 0 11" stroke="#fff" stroke-width="1.1"/>`)}
      </div></nav>`;
  }

  render() {
    const tabs = ["Arquivo", "Início", "Inserir", "Design", "Transição", "Animação", "Apresentação", "Exibir"];
    return html`
      <header class="title"><h1>Documento 1 - Presentations</h1>
        <div class="controls">
          <button aria-label="Minimizar"><svg width="14" height="14"><path d="M4 7h6" stroke="#aaa" stroke-width="2"/></svg></button>
          <button aria-label="Restaurar"><svg width="14" height="14"><path d="M6 4h4v4zM4 6v4h4z" fill="#aaa"/></svg></button>
          <button aria-label="Fechar"><svg width="14" height="14"><circle cx="7" cy="7" r="7" fill="#6cb068"/><path d="m4.500 4.500 5 5M9.500 4.500l-5 5" stroke="#222" stroke-width="1.8"/></svg></button>
        </div></header>
      <div class="bar"><nav class="tabs">${tabs.map((t) => html`<button class=${t === this.tab ? "on" : ""} @click=${() => (this.tab = t)}>${t}</button>`)}</nav>
        <div class="help"><button aria-label="Ajuda">?</button><button aria-label="Recolher"><svg width="10" height="6"><path d="m.5 5.500 4.500-4.500 4.500 4.500" fill="none" stroke="#fff"/></svg></button></div></div>
      ${this.ribbon()}${this.quick()}
      <div class="work">
        <aside class="left">
          <div class="ltabs"><button class="on">Slides</button><button>Estrutura de tópicos</button></div>
          <div class="lview"><div class="card"><p>Slide1</p><div class="thumb"></div></div>${this.vbar()}</div>
          <div class="foot">${this.hbar()}<div></div></div>
        </aside>
        <div class="split"><div class="grip">◂</div></div>
        ${this.desk()}
        <div class="mainbar">${this.vbar("both")}
          <div class="nav">${["first", "prev", "pages", "next", "last"].map((k) => this.ib(tri[k], k))}</div></div>
        <div class="split r"><div class="grip">▸</div></div>
        ${this.side()}
      </div>
      ${this.status()}${this.task()}`;
  }
}
